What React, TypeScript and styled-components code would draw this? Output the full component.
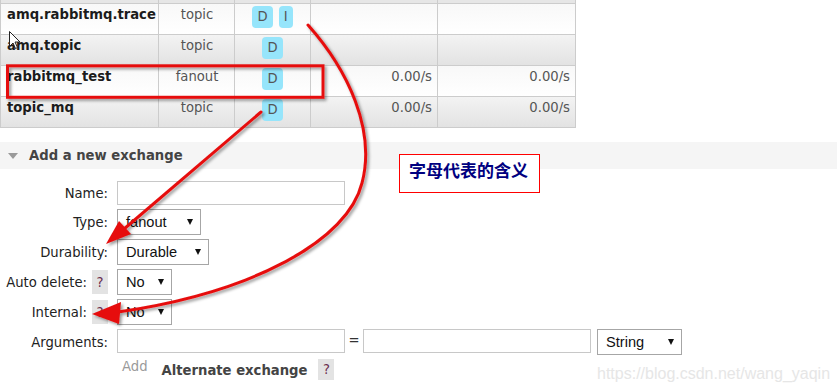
import React from "react";
import styled, { createGlobalStyle } from "styled-components";

const GlobalStyle = createGlobalStyle`
    html, body {
        margin: 0;
        padding: 0;
        background: #ffffff;
    }
    body {
        font-family: "DejaVu Sans", Verdana, sans-serif;
        font-size: 13.2px;
        color: #333333;
    }
    * {
        box-sizing: border-box;
    }
`;

const Page = styled.div`
    position: relative;
    width: 837px;
    height: 392px;
    overflow: hidden;
    background: #ffffff;
`;

/* exchanges table */
const Table = styled.div`
    width: 576px;
    border-left: 1px solid #cccccc;
`;

type Shade = "stub" | "light" | "dark";

const Row = styled.div<{ $shade: Shade }>`
    display: grid;
    grid-template-columns: 158px 76px 76px 127px 138px;
    height: ${(p) => (p.$shade === "stub" ? "4px" : "31px")};
    background: ${(p) =>
        p.$shade === "light"
            ? "linear-gradient(#f8f8f8, #ffffff)"
            : p.$shade === "dark"
            ? "linear-gradient(#f3f3f3, #e2e2e2)"
            : "#e6e6e6"};
`;

const Cell = styled.div<{ $align?: "left" | "center" | "right" }>`
    border-right: 1px solid #cccccc;
    border-bottom: 1px solid #cccccc;
    padding: 3px 5px 0 6px;
    line-height: 16px;
    font-size: 13.2px;
    color: #555555;
    white-space: nowrap;
    overflow: hidden;
    text-align: ${(p) => p.$align || "left"};
`;

const NameCell = styled(Cell)`
    font-weight: bold;
    color: #1c1c1c;
`;

const FeatureCell = styled(Cell)`
    display: flex;
    justify-content: center;
    gap: 6px;
    padding: 2px 0 0;
`;

const Badge = styled.span`
    display: inline-block;
    height: 22px;
    line-height: 22px;
    padding: 0 5px;
    border-radius: 4px;
    background: #96e5fb;
    color: #555555;
    font-size: 13.2px;
`;

/* add exchange section */
const SectionBar = styled.div`
    display: flex;
    align-items: center;
    gap: 11px;
    margin-top: 14px;
    height: 27px;
    padding-left: 8px;
    background: #f5f5f5;
    color: #444444;
    font-weight: bold;
    font-size: 13.2px;
`;

const Toggle = styled.span`
    width: 0;
    height: 0;
    border-left: 5px solid transparent;
    border-right: 5px solid transparent;
    border-top: 6px solid #9a9a9a;
`;

const Form = styled.div`
    display: flex;
    flex-direction: column;
    gap: 4px;
    margin-top: 12px;
`;

const FormRow = styled.div`
    display: flex;
    align-items: flex-start;
    gap: 9px;
`;

const Label = styled.div<{ $h?: number }>`
    width: 108px;
    height: ${(p) => p.$h ?? 26}px;
    display: flex;
    justify-content: flex-end;
    align-items: center;
    gap: 5px;
    color: #222222;
    white-space: nowrap;
`;

const Help = styled.span<{ $h: number }>`
    display: inline-flex;
    align-items: center;
    justify-content: center;
    width: 16px;
    height: ${(p) => p.$h}px;
    background: #e3e3e3;
    color: #6b2f4f;
    font-weight: normal;
    font-size: 13.2px;
`;

const TextInput = styled.input<{ $w: number }>`
    width: ${(p) => p.$w}px;
    height: 24px;
    margin: 0;
    padding: 0 4px;
    border: 1px solid #c8c8c8;
    border-radius: 0;
    background: #ffffff;
    font: 13.2px "DejaVu Sans", sans-serif;
    outline: none;
`;

const SelectBox = styled.div<{ $w: number }>`
    display: flex;
    align-items: center;
    justify-content: space-between;
    width: ${(p) => p.$w}px;
    height: 26px;
    padding: 0 7px 0 8px;
    border: 1px solid #a6a6a6;
    background: #ffffff;
    font-family: "Liberation Sans", Arial, sans-serif;
    font-size: 14.6px;
    color: #111111;
`;

const Caret = styled.span`
    width: 0;
    height: 0;
    border-left: 3.5px solid transparent;
    border-right: 3.5px solid transparent;
    border-top: 6px solid #111111;
`;

const Fields = styled.div`
    display: flex;
    align-items: flex-start;
`;

const Equals = styled.span`
    width: 18px;
    line-height: 24px;
    text-align: center;
    color: #333333;
`;

const TypeSelect = styled(SelectBox)`
    margin-left: 6px;
`;

const AddLink = styled.span`
    margin-left: 5px;
    line-height: 16px;
    color: #9a9a9a;
`;

const AltTitle = styled.span`
    margin: 4px 11px 0 14px;
    line-height: 16px;
    font-weight: bold;
    color: #444444;
`;

/* overlays */
const Note = styled.div`
    position: absolute;
    left: 399px;
    top: 154px;
    width: 141px;
    height: 39px;
    padding: 4px 0 0 9px;
    border: 1px solid #ff0000;
    background: #ffffff;
    font-family: "Noto Sans CJK SC", sans-serif;
    font-weight: bold;
    font-size: 17px;
    line-height: 22px;
    color: #000080;
`;

const Watermark = styled.div`
    position: absolute;
    left: 597px;
    top: 365px;
    font-family: "Liberation Sans", Arial, sans-serif;
    font-size: 16px;
    line-height: 18px;
    color: #e6e6e6;
    white-space: nowrap;
`;

const Overlay = styled.svg`
    position: absolute;
    left: 0;
    top: 0;
    pointer-events: none;
`;

interface Exchange {
    name: string;
    type: string;
    features: string[];
    rateIn: string;
    rateOut: string;
}

const exchanges: Exchange[] = [
    { name: "amq.rabbitmq.trace", type: "topic", features: ["D", "I"], rateIn: "", rateOut: "" },
    { name: "amq.topic", type: "topic", features: ["D"], rateIn: "", rateOut: "" },
    { name: "rabbitmq_test", type: "fanout", features: ["D"], rateIn: "0.00/s", rateOut: "0.00/s" },
    { name: "topic_mq", type: "topic", features: ["D"], rateIn: "0.00/s", rateOut: "0.00/s" },
];

const Select = ({ width, value }: { width: number; value: string }) => (
    <SelectBox $w={width}>
        <span>{value}</span>
        <Caret />
    </SelectBox>
);

const App: React.FC = () => {
    return (
        <Page>
            <GlobalStyle />
            <Table>
                <Row $shade="stub">
                    <Cell />
                    <Cell />
                    <Cell />
                    <Cell />
                    <Cell />
                </Row>
                {exchanges.map((ex, index) => (
                    <Row key={ex.name} $shade={index % 2 === 0 ? "light" : "dark"}>
                        <NameCell>{ex.name}</NameCell>
                        <Cell $align="center">{ex.type}</Cell>
                        <FeatureCell>
                            {ex.features.map((f) => (
                                <Badge key={f}>{f}</Badge>
                            ))}
                        </FeatureCell>
                        <Cell $align="right">{ex.rateIn}</Cell>
                        <Cell $align="right">{ex.rateOut}</Cell>
                    </Row>
                ))}
            </Table>

            <SectionBar>
                <Toggle />
                <span>Add a new exchange</span>
            </SectionBar>

            <Form>
                <FormRow>
                    <Label $h={24}>Name:</Label>
                    <TextInput $w={228} readOnly />
                </FormRow>
                <FormRow>
                    <Label>Type:</Label>
                    <Select width={84} value="fanout" />
                </FormRow>
                <FormRow>
                    <Label>Durability:</Label>
                    <Select width={92} value="Durable" />
                </FormRow>
                <FormRow>
                    <Label>
                        Auto delete: <Help $h={24}>?</Help>
                    </Label>
                    <Select width={55} value="No" />
                </FormRow>
                <FormRow>
                    <Label>
                        Internal: <Help $h={24}>?</Help>
                    </Label>
                    <Select width={55} value="No" />
                </FormRow>
                <FormRow>
                    <Label>Arguments:</Label>
                    <Fields>
                        <TextInput $w={228} readOnly />
                        <Equals>=</Equals>
                        <TextInput $w={228} readOnly />
                        <TypeSelect $w={85}>
                            <span>String</span>
                            <Caret />
                        </TypeSelect>
                    </Fields>
                </FormRow>
                <FormRow>
                    <Label $h={20} />
                    <Fields>
                        <AddLink>Add</AddLink>
                        <AltTitle>Alternate exchange</AltTitle>
                        <Help $h={21}>?</Help>
                    </Fields>
                </FormRow>
            </Form>

            <Note>字母代表的含义</Note>
            <Watermark>https://blog.csdn.net/wang_yaqin</Watermark>

            <Overlay width={837} height={392} viewBox="0 0 837 392">
                <defs>
                    <filter id="shade" x="-10%" y="-10%" width="130%" height="130%">
                        <feDropShadow dx="2" dy="2" stdDeviation="1.4" floodColor="#000000" floodOpacity="0.4" />
                    </filter>
                </defs>
                <g filter="url(#shade)">
                    <rect x={7.5} y={65.8} width={315.5} height={31.5} fill="none" stroke="#e60f0f" strokeWidth={3} />
                    <path
                        d="M308 25 C348 70 376 130 362 183 C348 240 255 292 118 312"
                        fill="none"
                        stroke="#e60f0f"
                        strokeWidth={3}
                        strokeLinecap="round"
                    />
                    <polygon points="92,314 121,302 119,324" fill="#e60f0f" />
                    <path d="M261 112 L124 229" fill="none" stroke="#e60f0f" strokeWidth={3} strokeLinecap="round" />
                    <polygon points="106,244 131,234 119,221" fill="#e60f0f" />
                </g>
                <path
                    d="M9.5 31.5 V46.5 L13 43 L15.5 48.5 L17.5 47.5 L15 42 H20 Z"
                    fill="#ffffff"
                    stroke="#222222"
                    strokeWidth={1}
                    strokeLinejoin="round"
                />
            </Overlay>
        </Page>
    );
};

export default App;
